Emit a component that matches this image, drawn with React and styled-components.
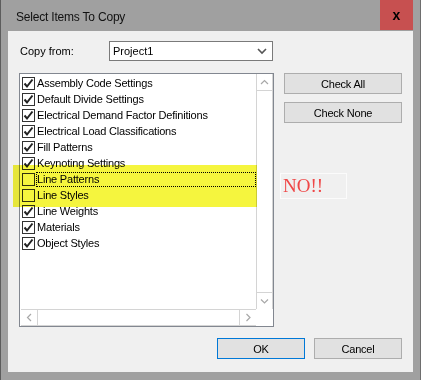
import styled, { createGlobalStyle } from 'styled-components';

const GlobalStyle = createGlobalStyle`
  body {
    margin: 0;
    background: #ffffff;
    font-family: "Liberation Sans", Arial, sans-serif;
  }
`;

const items = [
  { name: 'Assembly Code Settings', checked: true },
  { name: 'Default Divide Settings', checked: true },
  { name: 'Electrical Demand Factor Definitions', checked: true },
  { name: 'Electrical Load Classifications', checked: true },
  { name: 'Fill Patterns', checked: true },
  { name: 'Keynoting Settings', checked: true },
  { name: 'Line Patterns', checked: false, focused: true },
  { name: 'Line Styles', checked: false },
  { name: 'Line Weights', checked: true },
  { name: 'Materials', checked: true },
  { name: 'Object Styles', checked: true },
];

const Frame = styled.div`
  width: 421px;
  height: 380px;
  box-sizing: border-box;
  background: #a0a0a0;
  border-left: 1px solid #5c5c5c;
  border-right: 1px solid #6e6e6e;
  padding: 0 7px 8px 7px;
  display: flex;
  flex-direction: column;
`;

const TitleBar = styled.div`
  height: 31px;
  display: flex;
  align-items: flex-start;
  justify-content: space-between;
`;

const TitleText = styled.span`
  font-size: 12px;
  letter-spacing: -0.2px;
  color: #111;
  margin: 10px 0 0 8px;
`;

const CloseButton = styled.div`
  width: 33px;
  height: 30px;
  background: #c75050;
  display: flex;
  align-items: center;
  justify-content: center;
  padding-bottom: 1px;
  box-sizing: border-box;
  font-size: 14px;
  font-weight: bold;
  color: #000;
`;

const Client = styled.div`
  position: relative;
  flex: 1;
  background: #f0f0f0;
  padding: 10px 11px 0 11px;
  display: flex;
  flex-direction: column;
`;

const TopRow = styled.div`
  display: flex;
  align-items: center;
  height: 20px;
`;

const FieldLabel = styled.span`
  width: 89px;
  padding-left: 1px;
  font-size: 11px;
  color: #000;
`;

const Combo = styled.div`
  width: 164px;
  height: 20px;
  box-sizing: border-box;
  border: 1px solid #7a7a7a;
  background: #fff;
  display: flex;
  align-items: center;
  justify-content: space-between;
  padding: 0 5px 0 3px;
  font-size: 11px;
`;

const MainRow = styled.div`
  display: flex;
  margin-top: 12px;
`;

const ListBox = styled.div`
  width: 255px;
  height: 254px;
  box-sizing: border-box;
  border: 1px solid #828790;
  background: #fff;
  display: grid;
  grid-template-columns: 1fr 17px;
  grid-template-rows: 1fr 17px;
`;

const Items = styled.div`
  padding-top: 1px;
  display: flex;
  flex-direction: column;
  overflow: hidden;
`;

const Row = styled.div`
  height: 16px;
  display: flex;
  align-items: center;
  padding-left: 2px;
`;

const Box = styled.div`
  width: 13px;
  height: 13px;
  box-sizing: border-box;
  border: 1px solid #333;
  background: #fff;
  display: flex;
  align-items: center;
  justify-content: center;
  flex-shrink: 0;
`;

const ItemText = styled.span`
  flex: ${p => (p.$focused ? 1 : 'none')};
  height: 15px;
  line-height: 15px;
  margin-left: 1px;
  padding-left: 1px;
  box-sizing: border-box;
  font-size: 11px;
  letter-spacing: -0.2px;
  color: #000;
  white-space: nowrap;
  outline: ${p => (p.$focused ? '1px dotted #000' : 'none')};
  outline-offset: -1px;
`;

const VScroll = styled.div`
  display: flex;
  flex-direction: column;
  border-left: 1px solid #d4d4d4;
  border-right: 1px solid #d4d4d4;
  background: #fff;
`;

const HScroll = styled.div`
  display: flex;
  border-top: 1px solid #d4d4d4;
  border-bottom: 1px solid #d4d4d4;
  margin-left: 1px;
  background: #fff;
`;

const Track = styled.div`
  flex: 1;
`;

const Arrow = styled.div`
  width: ${p => (p.$horizontal ? '17px' : 'auto')};
  height: ${p => (p.$horizontal ? 'auto' : '17px')};
  box-sizing: border-box;
  display: flex;
  align-items: center;
  justify-content: center;
  ${p => p.$side}: 1px solid #d4d4d4;
`;

const Corner = styled.div`
  background: #fff;
`;

const SideButtons = styled.div`
  display: flex;
  flex-direction: column;
  gap: 8px;
  margin-left: 10px;
`;

const Button = styled.div`
  width: ${p => p.$w}px;
  height: 21px;
  box-sizing: border-box;
  background: #e1e1e1;
  border: 1px solid ${p => (p.$default ? '#0078d7' : '#adadad')};
  display: flex;
  align-items: center;
  justify-content: center;
  font-size: 11px;
  letter-spacing: -0.2px;
  color: #000;
`;

const Footer = styled.div`
  display: flex;
  justify-content: flex-end;
  gap: 9px;
  margin-top: 11px;
`;

const Highlight = styled.div`
  position: absolute;
  left: 5px;
  top: 134px;
  width: 244px;
  height: 42px;
  background: #f5f53e;
  mix-blend-mode: multiply;
  pointer-events: none;
`;

const Note = styled.div`
  position: absolute;
  left: 272px;
  top: 142px;
  width: 63px;
  height: 24px;
  border: 1px solid #fbfbfb;
  display: flex;
  align-items: center;
  padding-left: 2px;
  font-family: "Liberation Serif", "Times New Roman", serif;
  font-size: 19px;
  color: #ef4747;
`;

const Chevron = ({ dir }) => {
  const pts = {
    up: '1,6 4.5,2.5 8,6',
    down: '1,2.5 4.5,6 8,2.5',
    left: '6,1 2.5,4.5 6,8',
    right: '2.5,1 6,4.5 2.5,8',
  }[dir];
  return (
    <svg width="9" height="9" viewBox="0 0 9 9">
      <polyline points={pts} fill="none" stroke="#a8a8a8" strokeWidth="1.2" />
    </svg>
  );
};

const Check = () => (
  <svg width="11" height="11" viewBox="0 0 11 11">
    <polyline points="1.5,5.5 4,8.5 9.5,1.5" fill="none" stroke="#222" strokeWidth="2" />
  </svg>
);

export default function App() {
  return (
    <>
      <GlobalStyle />
      <Frame>
        <TitleBar>
          <TitleText>Select Items To Copy</TitleText>
          <CloseButton>x</CloseButton>
        </TitleBar>
        <Client>
          <TopRow>
            <FieldLabel>Copy from:</FieldLabel>
            <Combo>
              <span>Project1</span>
              <svg width="10" height="7" viewBox="0 0 10 7">
                <polyline points="1,1 5,5 9,1" fill="none" stroke="#555" strokeWidth="1.6" />
              </svg>
            </Combo>
          </TopRow>
          <MainRow>
            <ListBox>
              <Items>
                {items.map(it => (
                  <Row key={it.name}>
                    <Box>{it.checked && <Check />}</Box>
                    <ItemText $focused={it.focused}>{it.name}</ItemText>
                  </Row>
                ))}
              </Items>
              <VScroll>
                <Arrow $side="border-bottom"><Chevron dir="up" /></Arrow>
                <Track />
                <Arrow $side="border-top"><Chevron dir="down" /></Arrow>
              </VScroll>
              <HScroll>
                <Arrow $horizontal $side="border-right"><Chevron dir="left" /></Arrow>
                <Track />
                <Arrow $horizontal $side="border-left"><Chevron dir="right" /></Arrow>
              </HScroll>
              <Corner />
            </ListBox>
            <SideButtons>
              <Button $w={118}>Check All</Button>
              <Button $w={118}>Check None</Button>
            </SideButtons>
          </MainRow>
          <Footer>
            <Button $w={88} $default>OK</Button>
            <Button $w={88}>Cancel</Button>
          </Footer>
          <Highlight />
          <Note>NO!!</Note>
        </Client>
      </Frame>
    </>
  );
}
